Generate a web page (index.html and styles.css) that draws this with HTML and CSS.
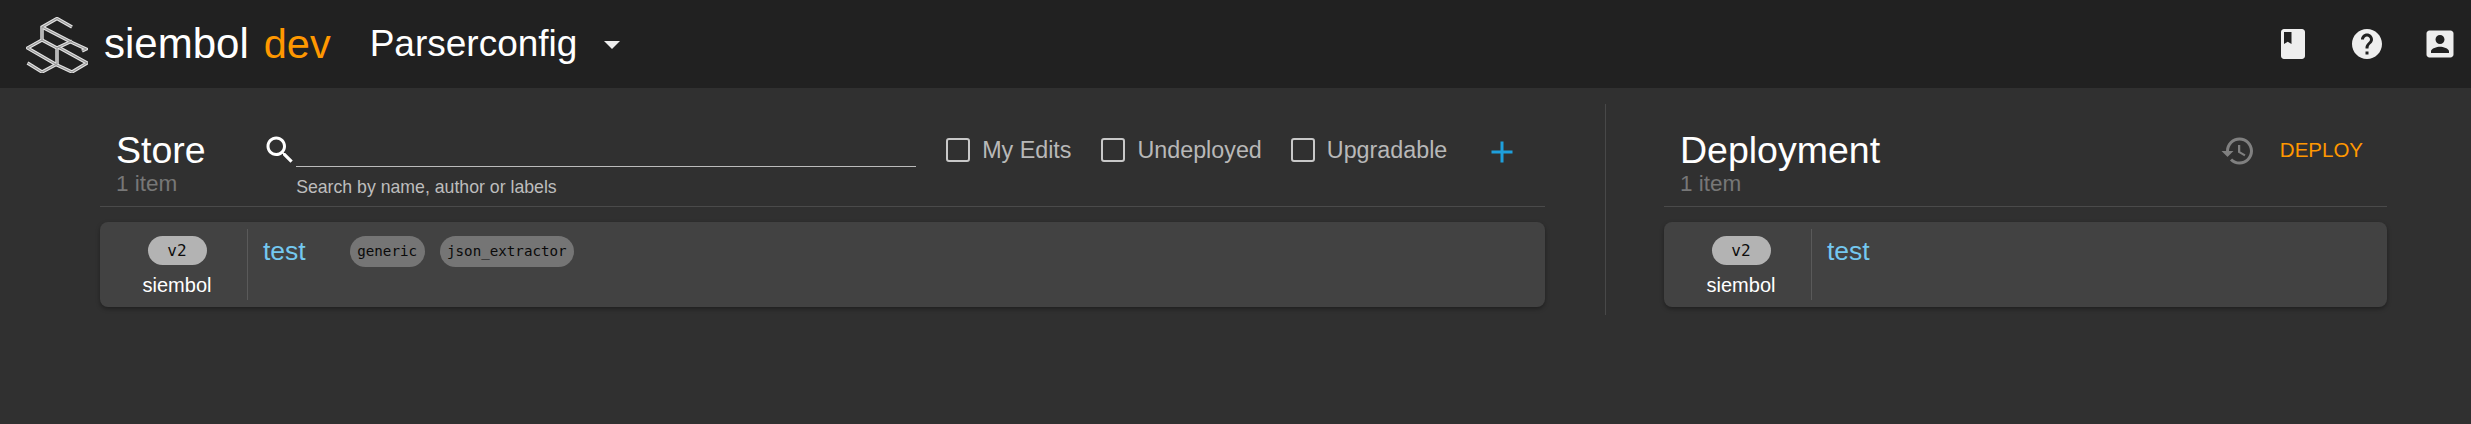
FILE: index.html
```html
<!DOCTYPE html>
<html lang="en">
<head>
<meta charset="utf-8">
<title>siembol</title>
<link rel="stylesheet" href="styles.css">
</head>
<body>
<header class="toolbar">
  <svg class="logo" viewBox="0 0 62 56" aria-hidden="true">
    <g class="logo-outer">
      <path d="M46 10 31 1.500 16 10V23L1.500 31 31 48 46 55 61 46 32 30"/>
      <path d="M16 10 47 26 60 32 56 34"/>
      <path d="M16 23 31 31V47"/>
      <path d="M46 24 31 31"/>
      <path d="M1.500 46 16 55 31 47"/>
    </g>
    <g class="logo-inner">
      <path d="M46 10 31 1.500 16 10V23L1.500 31 31 48 46 55 61 46 32 30"/>
      <path d="M16 10 47 26 60 32 56 34"/>
      <path d="M16 23 31 31V47"/>
      <path d="M46 24 31 31"/>
      <path d="M1.500 46 16 55 31 47"/>
    </g>
  </svg>
  <span class="brand">siembol</span>
  <span class="env">dev</span>
  <span class="service">Parserconfig</span>
  <span class="caret"></span>
  <nav class="toolbar-icons">
    <svg class="icon" viewBox="0 0 24 24"><path d="M18 2H6c-1.100 0-2 .9-2 2v16c0 1.100.9 2 2 2h12c1.100 0 2-.9 2-2V4c0-1.100-.9-2-2-2zM6 4h5v8l-2.500-1.500L6 12V4z"/></svg>
    <svg class="icon" viewBox="0 0 24 24"><path d="M12 2C6.480 2 2 6.480 2 12s4.480 10 10 10 10-4.480 10-10S17.520 2 12 2zm1 17h-2v-2h2v2zm2.070-7.750l-.9.920C13.450 12.900 13 13.500 13 15h-2v-.5c0-1.100.45-2.100 1.170-2.830l1.240-1.260c.37-.36.59-.86.59-1.410 0-1.100-.9-2-2-2s-2 .9-2 2H8c0-2.210 1.790-4 4-4s4 1.790 4 4c0 .88-.36 1.680-.93 2.250z"/></svg>
    <svg class="icon" viewBox="0 0 24 24"><path d="M3 5v14c0 1.100.89 2 2 2h14c1.100 0 2-.9 2-2V5c0-1.100-.9-2-2-2H5c-1.110 0-2 .9-2 2zm12 4c0 1.660-1.340 3-3 3s-3-1.340-3-3 1.340-3 3-3 3 1.340 3 3zm-9 8c0-2 4-3.100 6-3.100s6 1.100 6 3.100v1H6v-1z"/></svg>
  </nav>
</header>
<main class="board">
  <section class="store">
    <div class="pane-head">
      <div class="pane-title">
        <h2>Store</h2>
        <p>1 item</p>
      </div>
      <svg class="icon search-icon" viewBox="0 0 24 24"><path d="M15.500 14h-.79l-.28-.27C15.410 12.590 16 11.110 16 9.500 16 5.910 13.090 3 9.500 3S3 5.910 3 9.500 5.910 16 9.500 16c1.610 0 3.090-.59 4.230-1.570l.27.28v.79l5 4.990L20.490 19l-4.990-5zm-6 0C7.010 14 5 11.990 5 9.500S7.010 5 9.500 5 14 7.010 14 9.500 11.990 14 9.500 14z"/></svg>
      <div class="search">
        <div class="search-line"></div>
        <div class="search-hint">Search by name, author or labels</div>
      </div>
      <label class="check check-edits"><span class="box"></span>My Edits</label>
      <label class="check check-undeployed"><span class="box"></span>Undeployed</label>
      <label class="check check-upgradable"><span class="box"></span>Upgradable</label>
      <svg class="icon add-icon" viewBox="0 0 24 24"><path d="M19 13h-6v6h-2v-6H5v-2h6V5h2v6h6v2z"/></svg>
    </div>
    <article class="card">
      <div class="card-side">
        <span class="version">v2</span>
        <span class="author">siembol</span>
      </div>
      <div class="card-body">
        <a class="name">test</a>
        <span class="tag tag-first">generic</span>
        <span class="tag">json_extractor</span>
      </div>
    </article>
  </section>
  <div class="split"></div>
  <section class="deployment">
    <div class="pane-head">
      <div class="pane-title">
        <h2>Deployment</h2>
        <p>1 item</p>
      </div>
      <svg class="icon history-icon" viewBox="0 0 24 24"><path d="M13 3c-4.970 0-9 4.030-9 9H1l3.890 3.890.07.14L9 12H6c0-3.870 3.130-7 7-7s7 3.130 7 7-3.130 7-7 7c-1.930 0-3.680-.79-4.940-2.060l-1.420 1.420C8.270 19.990 10.510 21 13 21c4.970 0 9-4.030 9-9s-4.030-9-9-9zm-1 5v5l4.280 2.540.72-1.210-3.500-2.080V8H12z"/></svg>
      <span class="deploy">DEPLOY</span>
    </div>
    <article class="card">
      <div class="card-side">
        <span class="version">v2</span>
        <span class="author">siembol</span>
      </div>
      <div class="card-body">
        <a class="name">test</a>
      </div>
    </article>
  </section>
</main>
</body>
</html>
```
FILE: styles.css
```css
* { box-sizing: border-box; }
html, body { margin: 0; height: 100%; }
body {
  background: #303030;
  color: #fff;
  font-family: "Liberation Sans", Arial, sans-serif;
  overflow: hidden;
}
.toolbar {
  height: 88px;
  background: #212121;
  display: flex;
  align-items: center;
  padding-left: 26px;
}
.logo { width: 62px; height: 56px; margin-top: 1px; }
.logo-outer, .logo-inner { fill: none; stroke-linejoin: miter; }
.logo-outer { stroke: #e4e4e4; stroke-width: 3.400; }
.logo-inner { stroke: #999; stroke-width: 1.200; }
.brand { font-size: 42px; margin-left: 16px; }
.env { font-size: 41.500px; color: #ff9800; margin-left: 15px; }
.service { font-size: 37px; margin-left: 39px; }
.caret {
  margin-left: 27px;
  margin-top: 2px;
  width: 0;
  height: 0;
  border-left: 8px solid transparent;
  border-right: 8px solid transparent;
  border-top: 8px solid #eee;
}
.icon { width: 36px; height: 36px; flex: none; display: block; }
.toolbar-icons {
  margin-left: auto;
  display: flex;
  gap: 37.500px;
  padding-right: 13px;
}
.toolbar-icons .icon { fill: #eee; }
.board {
  display: flex;
  padding: 16px 0 0 100px;
}
.store { width: 1445px; }
.split {
  width: 1px;
  height: 211px;
  background: #484848;
  margin-left: 60px;
}
.deployment { width: 723px; margin-left: 58px; }
.pane-head {
  height: 103px;
  border-bottom: 1px solid #4a4a4a;
  display: flex;
  align-items: flex-start;
  padding: 26px 0 0 16px;
}
.pane-title { flex: none; }
.pane-title h2 {
  margin: 0;
  font-size: 37.500px;
  font-weight: 400;
  line-height: 40px;
}
.pane-title p {
  margin: 0;
  font-size: 22.500px;
  line-height: 28px;
  color: #777;
}
.search-icon { fill: #fff; margin: 2px 0 0 56.500px; }
.search { width: 620px; margin-left: -2px; }
.search-line { height: 37px; border-bottom: 1px solid #bbb; }
.search-hint { font-size: 17.700px; line-height: 20px; margin-top: 10px; color: #bdbdbd; }
.check {
  display: flex;
  align-items: center;
  font-size: 23.300px;
  line-height: 26px;
  color: #b8b8b8;
  margin-top: 7px;
}
.box {
  width: 24px;
  height: 24px;
  border: 2.500px solid #c8c8c8;
  border-radius: 3px;
  margin-right: 12px;
}
.check-edits { margin-left: 30px; }
.check-undeployed { margin-left: 30px; }
.check-upgradable { margin-left: 29px; }
.add-icon { fill: #1e9fdc; margin: 4px 0 0 37px; }
.history-icon { fill: #808080; margin: 3px 0 0 auto; }
.deploy { font-size: 20.500px; line-height: 24px; color: #ff9800; margin: 8px 24px 0 24px; }
.card {
  margin-top: 15px;
  height: 85px;
  background: #424242;
  border-radius: 8px;
  box-shadow: 0 2px 4px rgba(0, 0, 0, .35);
  display: flex;
  padding: 7px 0;
}
.card-side {
  width: 148px;
  border-right: 1px solid #5a5a5a;
  display: flex;
  flex-direction: column;
  align-items: center;
  padding: 7px 0 0 7px;
}
.version {
  width: 59px;
  height: 29px;
  border-radius: 15px;
  background: #b3b3b3;
  color: #0d0d0d;
  font-family: "DejaVu Sans Mono", monospace;
  font-size: 16px;
  line-height: 29px;
  text-align: center;
}
.author { font-size: 20px; line-height: 24px; margin-top: 8px; }
.card-body {
  display: flex;
  align-items: flex-start;
  padding: 7px 0 0 15px;
}
.name { font-size: 26.500px; line-height: 30px; color: #74c8f0; margin-right: 44px; }
.tag {
  height: 31px;
  border-radius: 16px;
  background: #757575;
  color: #0a0a0a;
  font-family: "DejaVu Sans Mono", monospace;
  font-size: 14.200px;
  line-height: 31px;
  padding: 0 7.500px;
  margin-right: 15px;
}
```
